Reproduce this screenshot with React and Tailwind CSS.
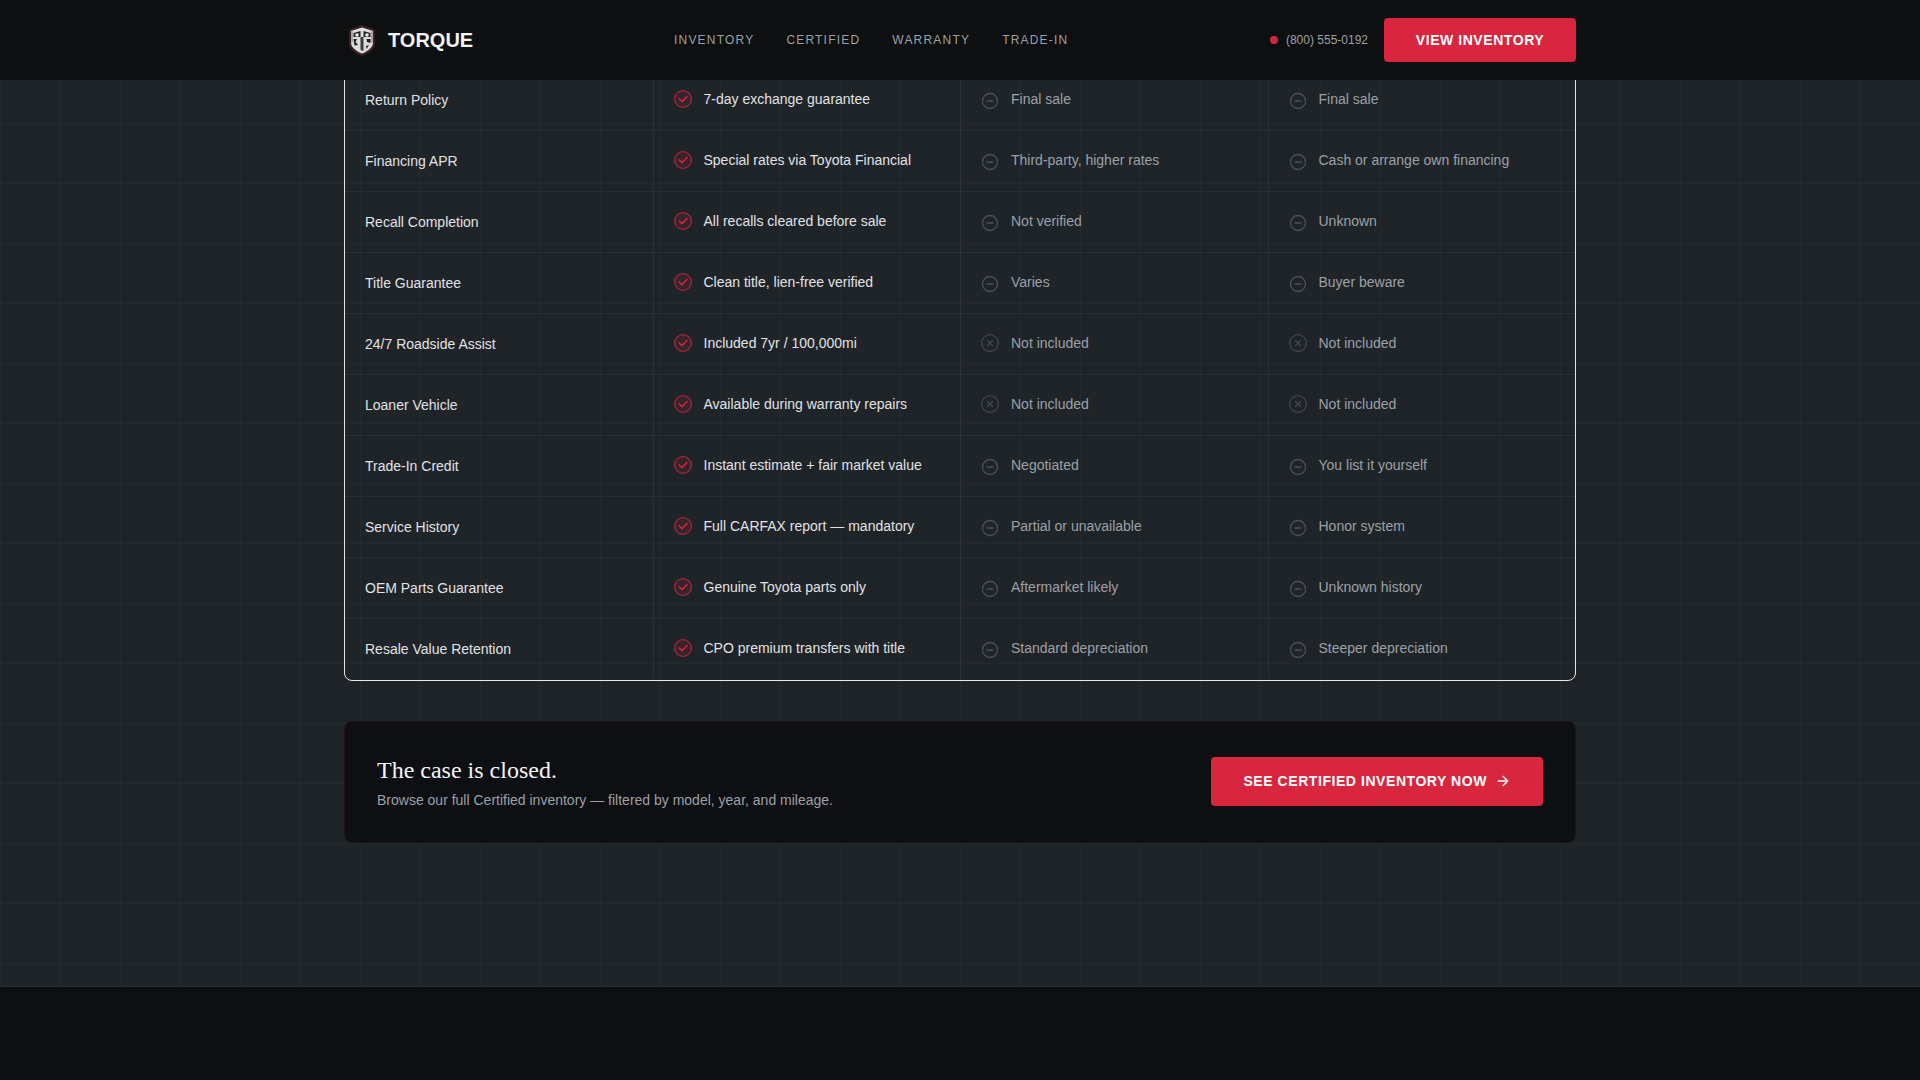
import { ArrowRight, CircleMinus, CircleX } from "lucide-react";

const rows = [
  { label: "Return Policy", cpo: "7-day exchange guarantee", a: ["m", "Final sale"], b: ["m", "Final sale"] },
  { label: "Financing APR", cpo: "Special rates via Toyota Financial", a: ["m", "Third-party, higher rates"], b: ["m", "Cash or arrange own financing"] },
  { label: "Recall Completion", cpo: "All recalls cleared before sale", a: ["m", "Not verified"], b: ["m", "Unknown"] },
  { label: "Title Guarantee", cpo: "Clean title, lien-free verified", a: ["m", "Varies"], b: ["m", "Buyer beware"] },
  { label: "24/7 Roadside Assist", cpo: "Included 7yr / 100,000mi", a: ["x", "Not included"], b: ["x", "Not included"] },
  { label: "Loaner Vehicle", cpo: "Available during warranty repairs", a: ["x", "Not included"], b: ["x", "Not included"] },
  { label: "Trade-In Credit", cpo: "Instant estimate + fair market value", a: ["m", "Negotiated"], b: ["m", "You list it yourself"] },
  { label: "Service History", cpo: "Full CARFAX report — mandatory", a: ["m", "Partial or unavailable"], b: ["m", "Honor system"] },
  { label: "OEM Parts Guarantee", cpo: "Genuine Toyota parts only", a: ["m", "Aftermarket likely"], b: ["m", "Unknown history"] },
  { label: "Resale Value Retention", cpo: "CPO premium transfers with title", a: ["m", "Standard depreciation"], b: ["m", "Steeper depreciation"] },
];

const navLinks = ["INVENTORY", "CERTIFIED", "WARRANTY", "TRADE-IN"];

function Logo() {
  return (
    <svg width="36" height="36" viewBox="0 0 36 36" className="shrink-0">
      <path d="M5 7.5 L18 3 L31 7.5 V21 C31 27.5 24.5 31.5 18 34 C11.5 31.5 5 27.5 5 21 Z" fill="#3d2026" />
      <path d="M7 9 L18 5.5 L29 9 V20.5 C29 26 23 29.5 18 31.5 C13 29.5 7 26 7 20.5 Z" fill="#dcdcdc" />
      <path d="M9.5 11 L16.5 9 V15 H9.5 Z M19.5 9 L26.5 11 V15 H19.5 Z" fill="#26272a" />
      <path d="M16.5 15 H19.5 V29 L16.5 28 Z" fill="#3a3b3e" />
      <path d="M9.5 17 H13 L11.5 20 L14 23 L10.5 23.5 Z M22.5 17 H26.5 V21 L23 20 Z M22 24 L25 23 L22.5 27 Z" fill="#1c1d20" />
      <circle cx="13" cy="13" r="1.8" fill="#e8e8e8" />
      <circle cx="23" cy="13" r="1.8" fill="#e8e8e8" />
      <path d="M8 9.5 V20.5" stroke="#6b4a50" strokeWidth="0.8" />
      <path d="M28 9.5 V20.5" stroke="#6b4a50" strokeWidth="0.8" />
    </svg>
  );
}

function CheckIcon() {
  return (
    <svg width="20" height="20" viewBox="0 0 24 24" fill="none" strokeLinecap="round" strokeLinejoin="round" className="shrink-0 -mt-[2px] -ml-px">
      <circle cx="12" cy="12" r="10" fill="#d7263d" fillOpacity="0.12" stroke="#a8263a" strokeWidth="1.6" />
      <path d="M7.5 12 L10.8 15.2 L16.8 9" stroke="#c9263c" strokeWidth="2" />
    </svg>
  );
}

function Cell({ kind, text }) {
  if (kind === "x") {
    return (
      <div className="flex items-center gap-[11px] px-5 border-l border-white/5 text-[#9ca0a6]">
        <CircleX size={20} strokeWidth={1.5} className="shrink-0 -mt-[2px] -ml-px text-[#43484e]" />
        <span className="-mt-[2px]">{text}</span>
      </div>
    );
  }
  return (
    <div className="flex items-center gap-3 px-5 border-l border-white/5 text-[#9ca0a6]">
      <CircleMinus size={18} strokeWidth={1.75} className="shrink-0 mt-[2px] text-[#4b5057]" />
      <span className="-mt-[2px]">{text}</span>
    </div>
  );
}

export default function App() {
  return (
    <div className="min-h-[1080px] flex flex-col bg-[#0d0f11] font-['Liberation_Sans',Arial,sans-serif] text-sm overflow-hidden">
      {/* Header */}
      <header className="relative z-10 h-20 shrink-0 bg-[#0d0f11]">
        <div className="max-w-[1280px] h-full mx-auto px-6 flex items-center">
          <div className="flex items-center gap-2 w-[330px]">
            <Logo />
            <span className="text-xl font-bold text-[#f3f4f6]">TORQUE</span>
          </div>
          <nav className="flex items-center gap-8">
            {navLinks.map((l) => (
              <a key={l} className="text-xs tracking-[0.1em] text-[#9ca0a6]">{l}</a>
            ))}
          </nav>
          <div className="ml-auto flex items-center gap-4">
            <div className="flex items-center gap-2 text-xs text-[#9ca0a6]">
              <span className="w-2 h-2 rounded-full bg-[#d7263d]" />
              (800) 555-0192
            </div>
            <button className="h-11 w-48 rounded bg-[#d7263d] text-sm font-bold tracking-[0.04em] text-white">VIEW INVENTORY</button>
          </div>
        </div>
      </header>

      {/* Comparison section, grid drawn behind */}
      <main className="h-[907px] shrink-0 border-b border-[#2a2d30] bg-[#1f2429] bg-[linear-gradient(rgba(255,255,255,0.022)_1px,transparent_1px),linear-gradient(90deg,rgba(255,255,255,0.022)_1px,transparent_1px)] bg-[size:60px_60px] bg-[position:0_43px]">
        <div className="max-w-[1280px] mx-auto px-6">
          <div className="-mt-[12px] pb-px border border-[#e5e7eb] rounded-lg overflow-hidden">
            {rows.map((row, i) => (
              <div key={row.label} className={`grid grid-cols-4 h-[61px] ${i > 0 ? "border-t border-white/5" : ""}`}>
                <div className="flex items-center px-5 text-[#e0e2e5]">{row.label}</div>
                <div className="flex items-center gap-[11px] px-5 border-l border-white/5 text-[#e0e2e5]">
                  <CheckIcon />
                  <span className="-mt-[2px]">{row.cpo}</span>
                </div>
                <Cell kind={row.a[0]} text={row.a[1]} />
                <Cell kind={row.b[0]} text={row.b[1]} />
              </div>
            ))}
          </div>

          {/* CTA */}
          <div className="mt-10 h-[122px] flex items-center justify-between px-8 rounded-lg border border-[#d7263d]/10 bg-[#0d0f11]/95">
            <div>
              <h3 className="font-['Liberation_Serif',serif] text-2xl text-[#f3f4f6]">The case is closed.</h3>
              <p className="mt-1 text-[#9ca0a6]">Browse our full Certified inventory — filtered by model, year, and mileage.</p>
            </div>
            <button className="h-[49px] mb-px pb-px flex items-center gap-2 px-8 rounded bg-[#d7263d] text-sm font-bold tracking-[0.04em] text-white">
              SEE CERTIFIED INVENTORY NOW
              <ArrowRight size={16} />
            </button>
          </div>
        </div>
      </main>

      <footer className="flex-1 bg-[#0d0f11]" />
    </div>
  );
}
